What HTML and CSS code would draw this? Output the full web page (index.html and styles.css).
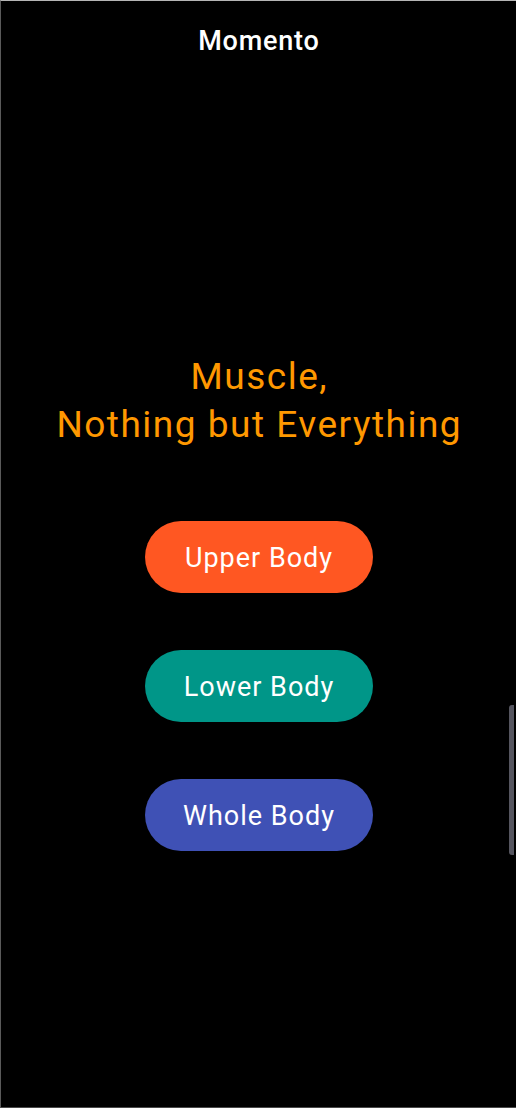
FILE: index.html
```html
<!DOCTYPE html>
<html>
<head>
<meta charset="utf-8">
<link rel="stylesheet" href="styles.css">
</head>
<body>
<div class="screen">
  <header class="appbar">Momento</header>
  <main class="content">
    <h1 class="headline">Muscle,<br>Nothing but Everything</h1>
    <div class="buttons">
      <button class="pill pill-upper">Upper Body</button>
      <button class="pill pill-lower">Lower Body</button>
      <button class="pill pill-whole">Whole Body</button>
    </div>
  </main>
  <div class="scrollbar"></div>
</div>
</body>
</html>
```
FILE: styles.css
```css
html, body {
  margin: 0;
  padding: 0;
  background: #000;
}
.screen {
  position: relative;
  box-sizing: border-box;
  width: 516px;
  height: 1108px;
  background: #000;
  border-top: 1px solid #b5b5b5;
  border-left: 1px solid #5a5a5a;
  border-bottom: 1px solid #4a4a4a;
  font-family: Roboto, "Noto Sans", sans-serif;
  overflow: hidden;
}
.appbar {
  height: 80px;
  display: flex;
  align-items: center;
  justify-content: center;
  color: #fff;
  font-size: 27px;
  font-weight: 500;
  letter-spacing: 0.8px;
  padding-left: 0.8px;
  line-height: 1;
}
.content {
  display: flex;
  flex-direction: column;
  align-items: center;
}
.headline {
  margin: 272px 0 0 0;
  color: #ff9800;
  font-weight: 400;
  font-size: 37px;
  line-height: 48px;
  letter-spacing: 1.5px;
  padding-left: 1.5px;
  text-align: center;
}
.buttons {
  margin-top: 72px;
  display: flex;
  flex-direction: column;
  align-items: center;
  gap: 57px;
}
.pill {
  width: 228px;
  height: 72px;
  border: none;
  border-radius: 36px;
  color: #fff;
  font-family: Roboto, "Noto Sans", sans-serif;
  font-size: 27px;
  font-weight: 400;
  letter-spacing: 1px;
  padding: 2px 0 0 1px;
}
.pill-upper { background: #ff5722; }
.pill-lower { background: #009688; }
.pill-whole { background: #3f51b5; }
.scrollbar {
  position: absolute;
  right: 2px;
  top: 704px;
  width: 5px;
  height: 150px;
  background: #55555f;
  border-radius: 3px 0 0 3px;
}
```
